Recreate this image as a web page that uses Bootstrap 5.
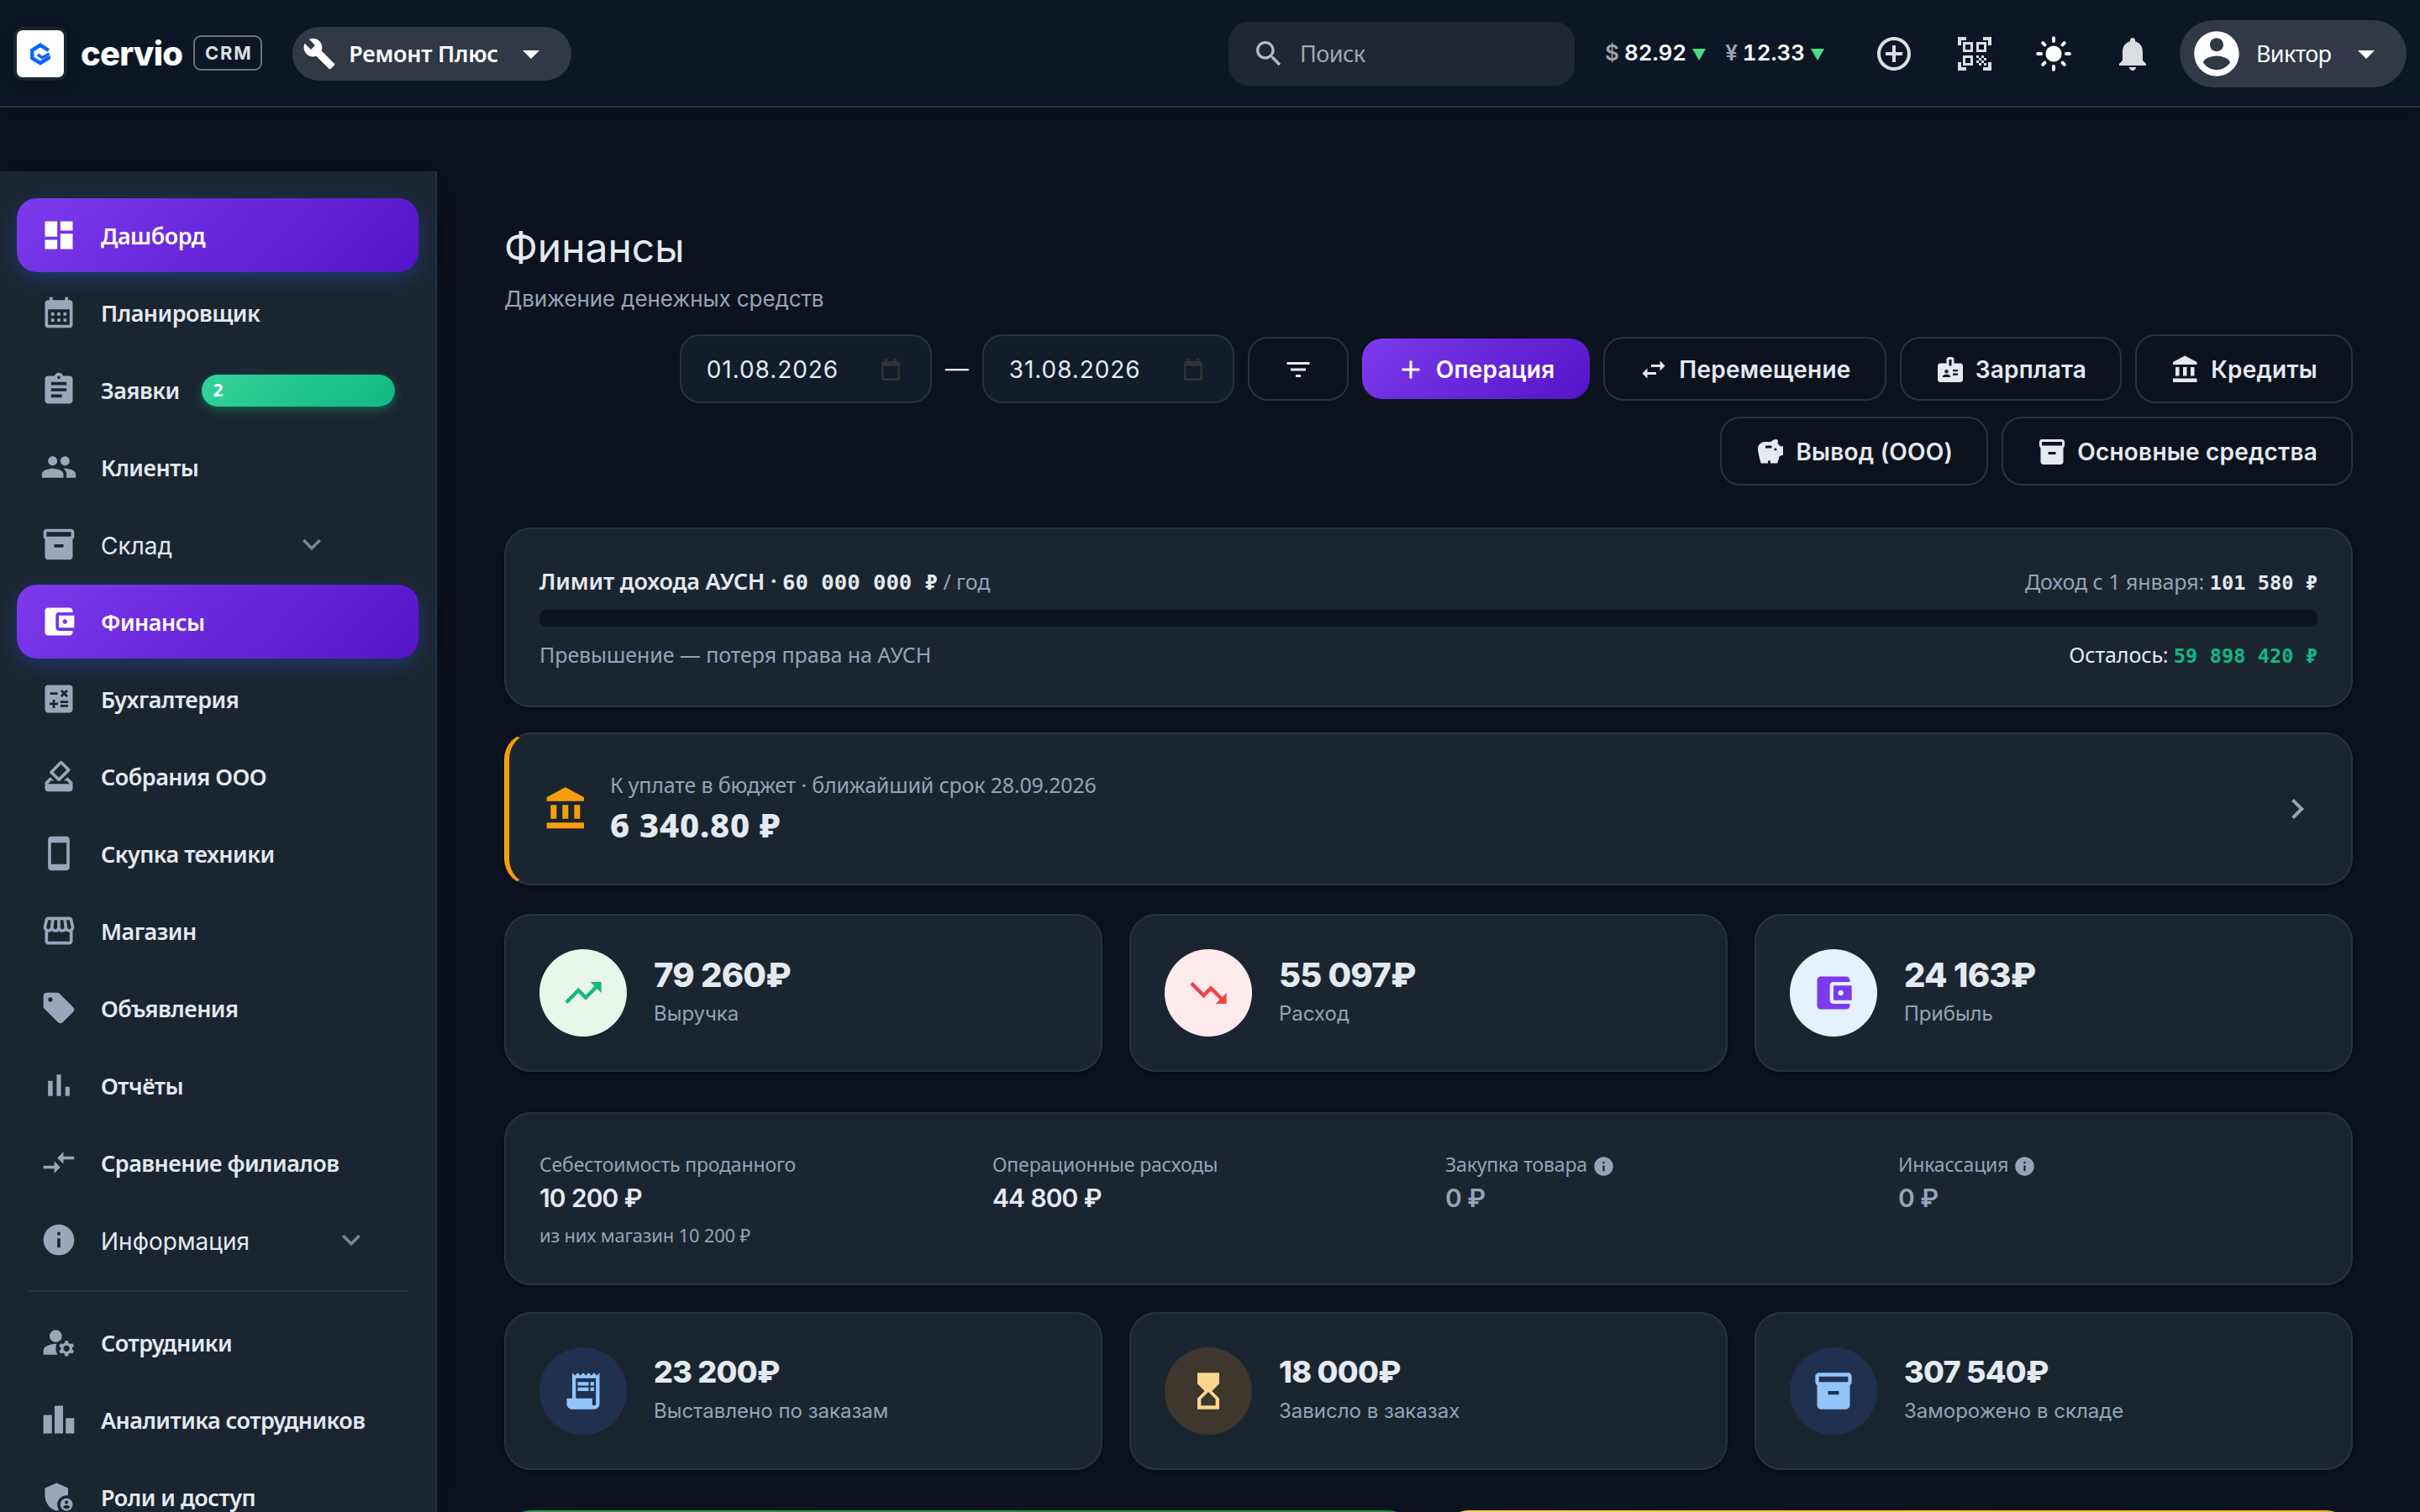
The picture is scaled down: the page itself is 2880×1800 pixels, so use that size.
<!DOCTYPE html>
<html lang="ru">
	<head>
		<meta charset="UTF-8" />
		<meta name="viewport" content="width=device-width, initial-scale=1.0" />
		<title>Финансы — cervio CRM</title>
		<link
			href="https://cdn.jsdelivr.net/npm/bootstrap@5.3.0/dist/css/bootstrap.min.css"
			rel="stylesheet"
		/>

		<style>
        :root {
            --line: #283144;
            --panel: #1b2530;
            --muted: #94a3b8;
            --light: #e5e9f0;
            --accent: linear-gradient(135deg, #7c3aed 0%, #5614c8 100%);
        }

        body {
            background: #0d131e;
            color: var(--light);
            font-family: "Noto Sans", sans-serif;
            font-size: 28px;
            line-height: 1.5;
            height: 1800px;
            overflow: hidden;
        }

        .mi {
            width: 1em;
            height: 1em;
            fill: currentColor;
            flex-shrink: 0;
            display: block;
        }

        .inter { font-family: Inter, sans-serif; }
        .muted { color: var(--muted); }

        /* top bar */
        .topbar {
            height: 128px;
            background: #0d1626;
            border-bottom: 2px solid var(--line);
            box-shadow: 0 4px 24px rgba(0, 0, 0, .3);
            padding: 2px 16px 0;
            position: relative;
            z-index: 2;
        }

        .logo-box {
            width: 64px;
            height: 64px;
            padding: 4px;
            border-radius: 12px;
            background: var(--panel);
            box-shadow: 0 4px 12px rgba(0, 0, 0, .3);
        }

        .logo-box div {
            height: 56px;
            border-radius: 7px;
            background: #fff;
        }

        .brand-name {
            font: 800 40px/1 Inter, sans-serif;
            letter-spacing: -.02em;
            color: #fff;
        }

        .brand-tag {
            font: 700 22px/1 Inter, sans-serif;
            letter-spacing: .08em;
            color: #dcdee1;
            border: 2px solid #6c737f;
            border-radius: 9px;
            height: 42px;
            width: 82px;
            margin: -2px 0 0 13px;
            padding-left: 2px;
        }

        .pill {
            background: #303945;
            color: #fff;
            border-radius: 50rem;
            font-size: 27px;
        }

        .org-pill {
            width: 332px;
            height: 64px;
            margin-left: 36px;
            padding-left: 12px;
            letter-spacing: -.01em;
        }

        .org-pill .mi { font-size: 40px; }
        .org-pill span { margin: 0 auto 0 15px; }
        .org-pill .drop { font-size: 48px; margin-right: 24px; }

        .search-box {
            width: 412px;
            height: 76px;
            border-radius: 24px;
            background: #1f2734;
            color: #a3a7ae;
            font-size: 27px;
            letter-spacing: -.02em;
            padding: 0 28px;
        }

        .search-box .mi { font-size: 40px; color: #b7bac0; margin-right: 17px; }

        .rates { width: 264px; gap: 23px; margin: -2px 0 0 36px; }

        .rate {
            font: 600 26px/1 Inter, sans-serif;
            font-variant-numeric: tabular-nums;
            color: #fff;
        }

        .rate span { color: #a0a3aa; margin-right: 6px; }

        .rate i {
            border: 8px solid transparent;
            border-top: 14px solid #4ade80;
            border-bottom: 0;
            margin: 4px 0 0 7px;
        }

        .tool-icons { font-size: 48px; gap: 46px; color: #dcdde1; margin: 0 32px 0 56px; }
        .tool-icons .mi:first-child { margin-right: 2px; }

        .user-pill {
            width: 270px;
            height: 80px;
            padding-left: 12px;
            letter-spacing: -.025em;
        }

        .user-pill .mi { font-size: 64px; }
        .user-pill span { margin: 0 auto 0 15px; }
        .user-pill .drop { font-size: 48px; margin-right: 24px; }

        /* side menu */
        .shell { height: 1672px; overflow: hidden; }

        .sidebar {
            width: 520px;
            height: 1596px;
            margin-top: 76px;
            flex-shrink: 0;
            padding: 32px 20px 0;
            background: var(--panel);
            border-right: 2px solid var(--line);
            box-shadow: 4px 0 40px rgba(0, 0, 0, .35);
        }

        .sidebar .nav-link {
            height: 88px;
            flex-shrink: 0;
            margin-bottom: 4px;
            padding: 3px 28px 0;
            gap: 28px;
            border-radius: 24px;
            color: var(--light);
            font-weight: 600;
            font-size: 27px;
            letter-spacing: -.02em;
        }

        .sidebar .nav-link .mi { font-size: 44px; color: #9aa7bb; margin-top: -3px; }
        .sidebar .nav-link.active,
        .sidebar .nav-link.active .mi { color: #fff; }

        .sidebar .nav-link.active {
            background: var(--accent);
            box-shadow: 0 8px 28px rgba(37, 99, 235, .32);
        }

        .sidebar .nav-link.group {
            font: 400 28px/1.5 Inter, sans-serif;
            letter-spacing: 0;
        }

        .sidebar .nav-link .caret { color: #78859a; margin-left: auto; }

        .count {
            flex: 0 0 230px;
            height: 38px;
            line-height: 36px;
            margin: -1px 0 0 -2px;
            padding-left: 14px;
            border-radius: 19px;
            background: linear-gradient(135deg, #34d399, #10b981);
            box-shadow: 0 4px 12px rgba(16, 185, 129, .4);
            color: #fff;
            font-size: 21px;
            font-weight: 700;
        }

        .side-line { height: 2px; margin: 12px 12px 16px; background: var(--line); }

        /* content */
        .content { padding: 138px 80px 0 80px; }

        .page-title {
            font: 400 48px/58px Inter, sans-serif;
            margin: 0 0 12px;
        }

        .page-sub {
            font: 400 26px/40px Inter, sans-serif;
            letter-spacing: -.004em;
            color: var(--muted);
            margin-bottom: 22px;
        }

        .toolbar { gap: 16px; margin-bottom: 50px; }

        .date-field {
            width: 300px;
            height: 82px;
            padding: 2px 34px 0 30px;
            border: 2px solid var(--line);
            border-radius: 24px;
            background: #121c2a;
            font: 400 28px/1 Inter, sans-serif;
            letter-spacing: .033em;
        }

        .date-field svg { width: 26px; height: 26px; fill: #333; }

        .tool {
            height: 82px;
            padding: 2px 40px 0;
            gap: 12px;
            border: 2px solid var(--line);
            border-radius: 24px;
            color: var(--light);
            font: 600 28px/1 Inter, sans-serif;
            letter-spacing: .008em;
        }

        .tool .mi { font-size: 36px; }
        .tool.short { height: 76px; }

        .tool.primary {
            height: 72px;
            border: 0;
            padding: 2px 42px 0 40px;
            background: var(--accent);
            color: #fff;
        }

        .panel {
            background: var(--panel);
            border: 2px solid var(--line);
            border-radius: 32px;
            padding: 40px;
            box-shadow: 0 2px 6px rgba(0, 0, 0, .5);
        }

        .limit {
            height: 214px;
            margin-bottom: 30px;
            padding-top: 42px;
            line-height: 40px;
            font-size: 25px;
            letter-spacing: -.003em;
        }

        .limit .lead-text { font-weight: 600; font-size: 27px; letter-spacing: -.007em; }
        .num { font-family: "DejaVu Sans Mono", monospace; font-weight: 700; font-size: 23.7px; letter-spacing: 0; }
        .lead-text .num { font-size: 25.6px; }
        .limit-bar { height: 20px; border-radius: 8px; background: #0e141f; margin: 12px 0 13px; }

        .tax {
            height: 182px;
            margin-bottom: 34px;
            border-left: 6px solid #f59e0b;
            gap: 24px;
        }

        .tax-note { font-size: 25px; line-height: 38px; letter-spacing: -.007em; }
        .tax-sum { font-weight: 800; font-size: 40px; line-height: 58px; letter-spacing: .02em; }

        .stats { gap: 32px; }
        .stats > .panel { flex: 1 1 0; height: 188px; gap: 32px; }

        .disc {
            width: 104px;
            height: 104px;
            border-radius: 50%;
            font-size: 52px;
            flex-shrink: 0;
        }

        .stat-value {
            font: 800 40px/46px Inter, sans-serif;
            letter-spacing: -.02em;
            margin-bottom: 3px;
        }

        .stat-value.small-value { font-size: 36px; line-height: 40px; margin-bottom: 7px; }
        .stat-label { font: 400 24px/40px Inter, sans-serif; color: var(--muted); }

        .costs { height: 206px; margin: 48px 0 32px; padding-top: 42px; gap: 40px; }
        .costs > div { flex: 1 1 0; }
        .cost-name { height: 36px; font-size: 23px; line-height: 36px; letter-spacing: -.007em; gap: 6px; color: var(--muted); }
        .cost-name .mi { font-size: 27px; margin-top: 5px; }
        .cost-sum { font: 600 30px/44px Inter, sans-serif; letter-spacing: -.03em; word-spacing: .02em; }
        .cost-note { font-size: 22px; line-height: 44px; letter-spacing: -.01em; color: var(--muted); }

        .banners { gap: 32px; margin-top: 48px; }
        .banners div { flex: 1 1 0; height: 180px; border-radius: 32px; }
    </style>
	</head>

	<body>
		<!-- icon sprite -->
		<svg class="d-none" xmlns="http://www.w3.org/2000/svg">
			<symbol id="build" viewBox="0 0 24 24"><path d="M22.7 19l-9.1-9.1c.9-2.3.4-5-1.5-6.9-2-2-5-2.4-7.4-1.3L9 6 6 9 1.6 4.7C.4 7.1.9 10.1 2.9 12.1c1.9 1.9 4.6 2.4 6.9 1.5l9.1 9.1c.4.4 1 .4 1.4 0l2.3-2.3c.5-.4.5-1.1.1-1.4z"/></symbol>
			<symbol id="drop" viewBox="0 0 24 24"><path d="M7 10l5 5 5-5z"/></symbol>
			<symbol id="search" viewBox="0 0 24 24"><path d="M15.5 14h-.79l-.28-.27C15.41 12.59 16 11.11 16 9.5 16 5.91 13.09 3 9.5 3S3 5.91 3 9.5 5.91 16 9.5 16c1.61 0 3.09-.59 4.23-1.57l.27.28v.79l5 4.99L20.49 19l-4.99-5zm-6 0C7.01 14 5 11.99 5 9.5S7.01 5 9.5 5 14 7.01 14 9.5 11.99 14 9.5 14z"/></symbol>
			<symbol id="add-circle" viewBox="0 0 24 24"><path d="M13 7h-2v4H7v2h4v4h2v-4h4v-2h-4V7zm-1-5C6.48 2 2 6.48 2 12s4.48 10 10 10 10-4.48 10-10S17.52 2 12 2zm0 18c-4.41 0-8-3.59-8-8s3.59-8 8-8 8 3.59 8 8-3.59 8-8 8z"/></symbol>
			<symbol id="qr" viewBox="0 0 24 24"><path d="M9.5 6.5v3h-3v-3h3M11 5H5v6h6V5zm-1.5 9.5v3h-3v-3h3M11 13H5v6h6v-6zm6.5-6.5v3h-3v-3h3M19 5h-6v6h6V5zm-6 8h1.5v1.5H13V13zm1.5 1.5H16V16h-1.5v-1.5zM16 13h1.5v1.5H16V13zm-3 3h1.5v1.5H13V16zm1.5 1.5H16V19h-1.5v-1.5zM16 16h1.5v1.5H16V16zm1.5-1.5H19V16h-1.5v-1.5zm0 3H19V19h-1.5v-1.5zM22 7h-2V4h-3V2h5v5zm0 15v-5h-2v3h-3v2h5zM2 22h5v-2H4v-3H2v5zM2 2v5h2V4h3V2H2z"/></symbol>
			<symbol id="sun" viewBox="0 0 24 24"><circle cx="12" cy="12" r="4.8"/><path fill="none" stroke="currentColor" stroke-width="2" stroke-linecap="round" d="M12 2.6v1.9M12 19.5v1.9M2.6 12h1.9M19.5 12h1.9M5.6 5.6l1.1 1.1M17.3 17.3l1.1 1.1M5.6 18.4l1.1-1.1M17.3 6.7l1.1-1.1"/></symbol>
			<symbol id="bell" viewBox="0 0 24 24"><path d="M12 22c1.1 0 2-.9 2-2h-4c0 1.1.89 2 2 2zm6-6v-5c0-3.07-1.64-5.64-4.5-6.32V4c0-.83-.67-1.5-1.5-1.5s-1.5.67-1.5 1.5v.68C7.63 5.36 6 7.92 6 11v5l-2 2v1h16v-1l-2-2z"/></symbol>
			<symbol id="account" viewBox="0 0 24 24"><path d="M12 2C6.48 2 2 6.48 2 12s4.48 10 10 10 10-4.48 10-10S17.52 2 12 2zm0 3c1.66 0 3 1.34 3 3s-1.34 3-3 3-3-1.34-3-3 1.34-3 3-3zm0 14.2c-2.5 0-4.71-1.28-6-3.22.03-1.99 4-3.08 6-3.08 1.99 0 5.97 1.09 6 3.08-1.29 1.94-3.5 3.22-6 3.22z"/></symbol>
			<symbol id="dashboard" viewBox="0 0 24 24"><path d="M3 13h8V3H3v10zm0 8h8v-6H3v6zm10 0h8V11h-8v10zm0-18v6h8V3h-8z"/></symbol>
			<symbol id="calendar" viewBox="0 0 24 24"><path d="M19 4h-1V2h-2v2H8V2H6v2H5c-1.11 0-1.99.9-1.99 2L3 20c0 1.1.89 2 2 2h14c1.1 0 2-.9 2-2V6c0-1.1-.9-2-2-2zm0 16H5V10h14v10zM9 14H7v-2h2v2zm4 0h-2v-2h2v2zm4 0h-2v-2h2v2zm-8 4H7v-2h2v2zm4 0h-2v-2h2v2zm4 0h-2v-2h2v2z"/></symbol>
			<symbol id="assignment" viewBox="0 0 24 24"><path d="M19 3h-4.18C14.4 1.84 13.3 1 12 1c-1.3 0-2.4.84-2.82 2H5c-1.1 0-2 .9-2 2v14c0 1.1.9 2 2 2h14c1.1 0 2-.9 2-2V5c0-1.1-.9-2-2-2zm-7 0c.55 0 1 .45 1 1s-.45 1-1 1-1-.45-1-1 .45-1 1-1zm2 14H7v-2h7v2zm3-4H7v-2h10v2zm0-4H7V7h10v2z"/></symbol>
			<symbol id="people" viewBox="0 0 24 24"><path d="M16 11c1.66 0 2.99-1.34 2.99-3S17.66 5 16 5c-1.66 0-3 1.34-3 3s1.34 3 3 3zm-8 0c1.66 0 2.99-1.34 2.99-3S9.66 5 8 5C6.34 5 5 6.34 5 8s1.34 3 3 3zm0 2c-2.33 0-7 1.17-7 3.5V19h14v-2.5c0-2.33-4.67-3.5-7-3.5zm8 0c-.29 0-.62.02-.97.05 1.16.84 1.97 1.97 1.97 3.45V19h6v-2.5c0-2.33-4.67-3.5-7-3.5z"/></symbol>
			<symbol id="inventory" viewBox="0 0 24 24"><path d="M20 2H4c-1 0-2 .9-2 2v3.01c0 .72.43 1.34 1 1.69V20c0 1.1 1.1 2 2 2h14c.9 0 2-.9 2-2V8.7c.57-.35 1-.97 1-1.69V4c0-1.1-1-2-2-2zm-5 12H9v-2h6v2zm5-7H4V4h16v3z"/></symbol>
			<symbol id="wallet" viewBox="0 0 24 24"><path d="M21 18v1c0 1.1-.9 2-2 2H5c-1.11 0-2-.9-2-2V5c0-1.1.89-2 2-2h14c1.1 0 2 .9 2 2v1h-9c-1.11 0-2 .9-2 2v8c0 1.1.89 2 2 2h9zm-9-2h10V8H12v8zm4-2.5c-.83 0-1.5-.67-1.5-1.5s.67-1.5 1.5-1.5 1.5.67 1.5 1.5-.67 1.5-1.5 1.5z"/></symbol>
			<symbol id="calculate" viewBox="0 0 24 24"><path d="M19 3H5c-1.1 0-2 .9-2 2v14c0 1.1.9 2 2 2h14c1.1 0 2-.9 2-2V5c0-1.1-.9-2-2-2zm-5.97 4.06L14.09 6l1.41 1.41L16.91 6l1.06 1.06-1.41 1.41 1.41 1.41-1.06 1.06-1.41-1.4-1.41 1.41-1.06-1.06 1.41-1.41-1.41-1.42zm-6.78.66h5v1.5h-5v-1.5zM11.5 16h-2v2H8v-2H6v-1.5h2v-2h1.5v2h2V16zm6.5 1.25h-5v-1.5h5v1.5zm0-2.5h-5v-1.5h5v1.5z"/></symbol>
			<symbol id="vote" viewBox="0 0 24 24"><path d="M18 13h-.68l-2 2h1.91L19 17H5l1.78-2h2.05l-2-2H6l-3 3v4c0 1.1.89 2 1.99 2H19c1.1 0 2-.89 2-2v-4l-3-3zm-1-5.05l-4.95 4.95-3.54-3.54 4.95-4.95L17 7.95zm-4.24-5.66L6.39 8.66c-.39.39-.39 1.02 0 1.41l4.95 4.95c.39.39 1.02.39 1.41 0l6.36-6.36c.39-.39.39-1.02 0-1.41L14.16 2.3c-.38-.4-1.01-.4-1.4-.01z"/></symbol>
			<symbol id="phone" viewBox="0 0 24 24"><path d="M17 1.01L7 1c-1.1 0-2 .9-2 2v18c0 1.1.9 2 2 2h10c1.1 0 2-.9 2-2V3c0-1.1-.9-1.99-2-1.99zM17 19H7V5h10v14z"/></symbol>
			<symbol id="store" viewBox="0 0 24 24"><path d="M21.9 8.89l-1.05-4.37c-.22-.9-1-1.52-1.91-1.52H5.05c-.9 0-1.69.63-1.9 1.52L2.1 8.89c-.24 1.02-.02 2.06.62 2.88.08.11.19.19.28.29V19c0 1.1.9 2 2 2h14c1.1 0 2-.9 2-2v-6.94c.09-.09.2-.18.28-.28.64-.82.87-1.87.62-2.89zm-2.99-3.9l1.05 4.37c.1.42.01.84-.25 1.17-.14.18-.44.47-.94.47-.61 0-1.14-.49-1.21-1.14L16.98 5l1.93-.01zM13 5h1.96l.54 4.52c.05.39-.07.78-.33 1.07-.22.26-.54.41-.95.41-.67 0-1.22-.59-1.22-1.31V5zM8.49 9.52L9.04 5H11v4.69c0 .72-.55 1.31-1.29 1.31-.34 0-.65-.15-.89-.41-.25-.29-.37-.68-.33-1.07zm-4.45-.16L5.05 5h1.97l-.58 4.86c-.08.65-.6 1.14-1.21 1.14-.49 0-.8-.29-.93-.47-.27-.32-.36-.75-.26-1.17zM5 19v-6.03c.08.01.15.03.23.03.87 0 1.66-.36 2.24-.95.6.6 1.4.95 2.31.95.87 0 1.65-.36 2.23-.93.59.57 1.39.93 2.29.93.84 0 1.64-.35 2.24-.95.58.59 1.37.95 2.24.95.08 0 .15-.02.23-.03V19H5z"/></symbol>
			<symbol id="sell" viewBox="0 0 24 24"><path d="M21.41 11.58l-9-9C12.05 2.22 11.55 2 11 2H4c-1.1 0-2 .9-2 2v7c0 .55.22 1.05.59 1.42l9 9c.36.36.86.58 1.41.58s1.05-.22 1.41-.59l7-7c.37-.36.59-.86.59-1.41s-.23-1.06-.59-1.42zM6.5 8C5.67 8 5 7.33 5 6.5S5.67 5 6.5 5 8 5.67 8 6.5 7.33 8 6.5 8z"/></symbol>
			<symbol id="bars" viewBox="0 0 24 24"><path d="M5 9.2h3V19H5V9.2zM10.6 5h2.8v14h-2.8V5zm5.6 8H19v6h-2.8v-6z"/></symbol>
			<symbol id="compare" viewBox="0 0 24 24"><path d="M9.01 14H2v2h7.01v3L13 15l-3.99-4v3zm5.98-1v-3H22V8h-7.01V5L11 9l3.99 4z"/></symbol>
			<symbol id="info" viewBox="0 0 24 24"><path d="M12 2C6.48 2 2 6.48 2 12s4.48 10 10 10 10-4.48 10-10S17.52 2 12 2zm1 15h-2v-6h2v6zm0-8h-2V7h2v2z"/></symbol>
			<symbol id="expand" viewBox="0 0 24 24"><path d="M16.59 8.59L12 13.17 7.41 8.59 6 10l6 6 6-6z"/></symbol>
			<symbol id="staff" viewBox="0 0 24 24"><circle cx="10" cy="8" r="4"/><path d="M10.67 13.02C10.45 13.01 10.23 13 10 13c-2.42 0-4.68.67-6.61 1.82-.88.52-1.39 1.5-1.39 2.53V20h9.26C10.47 18.87 10 17.49 10 16c0-1.07.25-2.07.67-2.98zM20.75 16c0-.22-.03-.42-.06-.63l1.14-1.01-1-1.73-1.45.49c-.32-.27-.68-.48-1.08-.63L18 11h-2l-.3 1.49c-.4.15-.76.36-1.08.63l-1.45-.49-1 1.73 1.14 1.01c-.03.21-.06.41-.06.63s.03.42.06.63l-1.14 1.01 1 1.73 1.45-.49c.32.27.68.48 1.08.63L16 21h2l.3-1.49c.4-.15.76-.36 1.08-.63l1.45.49 1-1.73-1.14-1.01c.03-.21.06-.41.06-.63zM17 18c-1.1 0-2-.9-2-2s.9-2 2-2 2 .9 2 2-.9 2-2 2z"/></symbol>
			<symbol id="leaderboard" viewBox="0 0 24 24"><path d="M7.5 21H2V9h5.5v12zm7.25-18h-5.5v18h5.5V3zM22 11h-5.5v10H22V11z"/></symbol>
			<symbol id="admin" viewBox="0 0 24 24"><path d="M17 11c.34 0 .67.04 1 .09V6.27L10.5 3 3 6.27v4.91c0 4.54 3.2 8.79 7.5 9.82.55-.13 1.08-.32 1.6-.55-.69-.98-1.1-2.17-1.1-3.45 0-3.31 2.69-6 6-6zM17 13c-2.21 0-4 1.79-4 4s1.79 4 4 4 4-1.79 4-4-1.79-4-4-4zm0 1.38c.62 0 1.12.51 1.12 1.12s-.51 1.12-1.12 1.12-1.12-.51-1.12-1.12.5-1.12 1.12-1.12zm0 5.37c-.93 0-1.74-.46-2.24-1.17.05-.72 1.51-1.08 2.24-1.08s2.19.36 2.24 1.08c-.5.71-1.31 1.17-2.24 1.17z"/></symbol>
			<symbol id="filter" viewBox="0 0 24 24"><path d="M10 18h4v-2h-4v2zM3 6v2h18V6H3zm3 7h12v-2H6v2z"/></symbol>
			<symbol id="add" viewBox="0 0 24 24"><path d="M19 13h-6v6h-2v-6H5v-2h6V5h2v6h6v2z"/></symbol>
			<symbol id="swap" viewBox="0 0 24 24"><path d="M6.99 11L3 15l3.99 4v-3H14v-2H6.99v-3zM21 9l-3.99-4v3H10v2h7.01v3L21 9z"/></symbol>
			<symbol id="id-badge" viewBox="0 0 24 24"><path d="M20 7h-5V4c0-1.1-.9-2-2-2h-2c-1.1 0-2 .9-2 2v3H4c-1.1 0-2 .9-2 2v11c0 1.1.9 2 2 2h16c1.1 0 2-.9 2-2V9c0-1.1-.9-2-2-2zM9 12c.83 0 1.5.67 1.5 1.5S9.83 15 9 15s-1.5-.67-1.5-1.5S8.17 12 9 12zm3 6H6v-.75c0-1 2-1.5 3-1.5s3 .5 3 1.5V18zm1-9h-2V4h2v5zm5 7.5h-4V15h4v1.5zm0-3h-4V12h4v1.5z"/></symbol>
			<symbol id="bank" viewBox="0 0 24 24"><path d="M4 10v7h3v-7H4zm6 0v7h3v-7h-3zM2 22h19v-3H2v3zm14-12v7h3v-7h-3zm-4.5-9L2 6v2h19V6l-9.5-5z"/></symbol>
			<symbol id="savings" viewBox="0 0 24 24"><path d="M19.83 7.5l-2.27-2.27c.07-.42.18-.81.32-1.15.08-.18.12-.37.12-.58 0-.83-.67-1.5-1.5-1.5-1.64 0-3.09.79-4 2h-5C4.46 4 2 6.46 2 9.5S4.5 21 4.5 21H10v-2h2v2h5.5l1.68-5.59 2.82-.94V7.5h-2.17zM13 9H8V7h5v2zm3 2c-.55 0-1-.45-1-1s.45-1 1-1 1 .45 1 1-.45 1-1 1z"/></symbol>
			<symbol id="right" viewBox="0 0 24 24"><path d="M10 6L8.59 7.41 13.17 12l-4.58 4.59L10 18l6-6z"/></symbol>
			<symbol id="up" viewBox="0 0 24 24"><path d="M16 6l2.29 2.29-4.88 4.88-4-4L2 16.59 3.41 18l6-6 4 4 6.3-6.29L22 12V6z"/></symbol>
			<symbol id="down" viewBox="0 0 24 24"><path d="M16 18l2.29-2.29-4.88-4.88-4 4L2 7.41 3.41 6l6 6 4-4 6.3 6.29L22 12v6z"/></symbol>
			<symbol id="receipt" viewBox="0 0 24 24"><path d="M19.5 3.5L18 2l-1.5 1.5L15 2l-1.5 1.5L12 2l-1.5 1.5L9 2 7.5 3.5 6 2v14H3v3c0 1.66 1.34 3 3 3h12c1.66 0 3-1.34 3-3V2l-1.5 1.5zM19 19c0 .55-.45 1-1 1s-1-.45-1-1v-3H8V5h11v14zM9 7h6v2H9zM16 7h2v2h-2zM9 10h6v2H9zM16 10h2v2h-2z"/></symbol>
			<symbol id="hourglass" viewBox="0 0 24 24"><path d="M6 2l.01 6L10 12l-3.99 4.01L6 22h12v-6l-4-4 4-3.99V2H6zm10 14.5V20H8v-3.5l4-4 4 4z"/></symbol>
			<symbol id="date" viewBox="0 0 24 24"><path d="M19 2.500h-1V0h-2.500v2.500h-7V0H6v2.500H4c-1.100 0-2 .9-2 2V22c0 1.100.9 2 2 2h16c1.100 0 2-.9 2-2V4.500c0-1.100-.9-2-2-2zm.8 19.300H4.200V8h15.600z"/></symbol>
		</svg>

		<header class="topbar d-flex align-items-center">
			<div class="logo-box">
				<div class="d-flex align-items-center justify-content-center">
					<svg width="24" height="27" viewBox="0 0 24 27" fill="none" stroke="#0b63ff" stroke-width="4.4">
						<path d="M21.8 9L12 2.700 2.300 8.800v9.400L12 24.200l9.800-6.200v-2.500" />
						<path stroke-width="3.400" d="M8.800 13.800l5.400 4L22.600 13" />
					</svg>
				</div>
			</div>
			<div class="brand-name ms-3">cervio</div>
			<div class="brand-tag d-flex align-items-center justify-content-center">CRM</div>
			<div class="pill org-pill d-flex align-items-center fw-semibold">
				<svg class="mi"><use href="#build" /></svg>
				<span>Ремонт Плюс</span>
				<svg class="mi drop"><use href="#drop" /></svg>
			</div>

			<div class="search-box d-flex align-items-center ms-auto">
				<svg class="mi"><use href="#search" /></svg>
				<span>Поиск</span>
			</div>
			<div class="rates d-flex">
				<div class="rate d-flex align-items-center"><span>$</span>82.92<i></i></div>
				<div class="rate d-flex align-items-center"><span>¥</span>12.33<i></i></div>
			</div>
			<div class="tool-icons d-flex">
				<svg class="mi"><use href="#add-circle" /></svg>
				<svg class="mi"><use href="#qr" /></svg>
				<svg class="mi text-white"><use href="#sun" /></svg>
				<svg class="mi"><use href="#bell" /></svg>
			</div>
			<div class="pill user-pill d-flex align-items-center">
				<svg class="mi"><use href="#account" /></svg>
				<span>Виктор</span>
				<svg class="mi drop"><use href="#drop" /></svg>
			</div>
		</header>

		<div class="shell d-flex">
			<nav class="sidebar nav flex-column flex-nowrap">
				<a class="nav-link active d-flex align-items-center"><svg class="mi"><use href="#dashboard" /></svg>Дашборд</a>
				<a class="nav-link d-flex align-items-center"><svg class="mi"><use href="#calendar" /></svg>Планировщик</a>
				<a class="nav-link d-flex align-items-center"><svg class="mi"><use href="#assignment" /></svg>Заявки<span class="count">2</span></a>
				<a class="nav-link d-flex align-items-center"><svg class="mi"><use href="#people" /></svg>Клиенты</a>
				<a class="nav-link group d-flex align-items-center"><svg class="mi"><use href="#inventory" /></svg>Склад<svg class="mi caret" style="margin-right: 77px"><use href="#expand" /></svg></a>
				<a class="nav-link active d-flex align-items-center"><svg class="mi"><use href="#wallet" /></svg>Финансы</a>
				<a class="nav-link d-flex align-items-center"><svg class="mi"><use href="#calculate" /></svg>Бухгалтерия</a>
				<a class="nav-link d-flex align-items-center"><svg class="mi"><use href="#vote" /></svg>Собрания ООО</a>
				<a class="nav-link d-flex align-items-center"><svg class="mi"><use href="#phone" /></svg>Скупка техники</a>
				<a class="nav-link d-flex align-items-center"><svg class="mi"><use href="#store" /></svg>Магазин</a>
				<a class="nav-link d-flex align-items-center"><svg class="mi"><use href="#sell" /></svg>Объявления</a>
				<a class="nav-link d-flex align-items-center"><svg class="mi"><use href="#bars" /></svg>Отчёты</a>
				<a class="nav-link d-flex align-items-center"><svg class="mi"><use href="#compare" /></svg>Сравнение филиалов</a>
				<a class="nav-link group d-flex align-items-center"><svg class="mi"><use href="#info" /></svg>Информация<svg class="mi caret" style="margin-right: 30px"><use href="#expand" /></svg></a>
				<div class="side-line flex-shrink-0"></div>
				<a class="nav-link d-flex align-items-center"><svg class="mi"><use href="#staff" /></svg>Сотрудники</a>
				<a class="nav-link d-flex align-items-center"><svg class="mi"><use href="#leaderboard" /></svg>Аналитика сотрудников</a>
				<a class="nav-link d-flex align-items-center"><svg class="mi"><use href="#admin" /></svg>Роли и доступ</a>
			</nav>

			<main class="content flex-grow-1">
				<h1 class="page-title">Финансы</h1>
				<div class="page-sub">Движение денежных средств</div>

				<div class="toolbar d-flex flex-wrap align-items-center justify-content-end">
					<div class="date-field d-flex align-items-center justify-content-between">01.08.2026<svg><use href="#date" /></svg></div>
					<span class="inter">—</span>
					<div class="date-field d-flex align-items-center justify-content-between">31.08.2026<svg><use href="#date" /></svg></div>
					<button class="btn tool short d-flex align-items-center"><svg class="mi"><use href="#filter" /></svg></button>
					<button class="btn tool primary d-flex align-items-center"><svg class="mi"><use href="#add" /></svg>Операция</button>
					<button class="btn tool short d-flex align-items-center"><svg class="mi"><use href="#swap" /></svg>Перемещение</button>
					<button class="btn tool short d-flex align-items-center"><svg class="mi"><use href="#id-badge" /></svg>Зарплата</button>
					<button class="btn tool d-flex align-items-center"><svg class="mi"><use href="#bank" /></svg>Кредиты</button>
					<button class="btn tool d-flex align-items-center"><svg class="mi"><use href="#savings" /></svg>Вывод (ООО)</button>
					<button class="btn tool d-flex align-items-center"><svg class="mi"><use href="#inventory" /></svg>Основные средства</button>
				</div>

				<section class="panel limit">
					<div class="d-flex justify-content-between">
						<div><span class="lead-text">Лимит дохода АУСН · <span class="num">60 000 000 ₽</span></span> <span class="muted">/ год</span></div>
						<div><span class="muted">Доход с 1 января:</span> <span class="num">101 580 ₽</span></div>
					</div>
					<div class="limit-bar"></div>
					<div class="d-flex justify-content-between">
						<div class="muted">Превышение — потеря права на АУСН</div>
						<div>Осталось: <span class="num" style="color: #10b981">59 898 420 ₽</span></div>
					</div>
				</section>

				<section class="panel tax d-flex align-items-center">
					<svg class="mi" style="font-size: 56px; color: #f59e0b"><use href="#bank" /></svg>
					<div>
						<div class="tax-note muted">К уплате в бюджет · ближайший срок 28.09.2026</div>
						<div class="tax-sum">6 340.80 ₽</div>
					</div>
					<svg class="mi muted ms-auto" style="font-size: 48px"><use href="#right" /></svg>
				</section>

				<section class="stats d-flex">
					<div class="panel d-flex align-items-center">
						<div class="disc d-flex align-items-center justify-content-center" style="background: #e8f5e9; color: #10b981"><svg class="mi"><use href="#up" /></svg></div>
						<div>
							<div class="stat-value">79 260₽</div>
							<div class="stat-label">Выручка</div>
						</div>
					</div>
					<div class="panel d-flex align-items-center">
						<div class="disc d-flex align-items-center justify-content-center" style="background: #ffebee; color: #ef4444"><svg class="mi"><use href="#down" /></svg></div>
						<div>
							<div class="stat-value">55 097₽</div>
							<div class="stat-label">Расход</div>
						</div>
					</div>
					<div class="panel d-flex align-items-center">
						<div class="disc d-flex align-items-center justify-content-center" style="background: #e3f2fd; color: #7c3aed"><svg class="mi"><use href="#wallet" /></svg></div>
						<div>
							<div class="stat-value">24 163₽</div>
							<div class="stat-label">Прибыль</div>
						</div>
					</div>
				</section>

				<section class="panel costs d-flex">
					<div>
						<div class="cost-name">Себестоимость проданного</div>
						<div class="cost-sum">10 200 ₽</div>
						<div class="cost-note">из них магазин 10 200 ₽</div>
					</div>
					<div>
						<div class="cost-name">Операционные расходы</div>
						<div class="cost-sum">44 800 ₽</div>
					</div>
					<div>
						<div class="cost-name d-flex align-items-center">Закупка товара <svg class="mi"><use href="#info" /></svg></div>
						<div class="cost-sum muted">0 ₽</div>
					</div>
					<div>
						<div class="cost-name d-flex align-items-center">Инкассация <svg class="mi"><use href="#info" /></svg></div>
						<div class="cost-sum muted">0 ₽</div>
					</div>
				</section>

				<section class="stats d-flex">
					<div class="panel d-flex align-items-center">
						<div class="disc d-flex align-items-center justify-content-center" style="background: #203150; color: #93c5fd"><svg class="mi"><use href="#receipt" /></svg></div>
						<div>
							<div class="stat-value small-value">23 200₽</div>
							<div class="stat-label">Выставлено по заказам</div>
						</div>
					</div>
					<div class="panel d-flex align-items-center">
						<div class="disc d-flex align-items-center justify-content-center" style="background: #3d372d; color: #fcd68e"><svg class="mi"><use href="#hourglass" /></svg></div>
						<div>
							<div class="stat-value small-value">18 000₽</div>
							<div class="stat-label">Зависло в заказах</div>
						</div>
					</div>
					<div class="panel d-flex align-items-center">
						<div class="disc d-flex align-items-center justify-content-center" style="background: #203150; color: #93c5fd"><svg class="mi"><use href="#inventory" /></svg></div>
						<div>
							<div class="stat-value small-value">307 540₽</div>
							<div class="stat-label">Заморожено в складе</div>
						</div>
					</div>
				</section>

				<section class="banners d-flex">
					<div style="background: linear-gradient(135deg, #22a04e, #15803d)"></div>
					<div style="background: linear-gradient(135deg, #fcd34d, #eab308)"></div>
				</section>
			</main>
		</div>

		<script src="https://cdn.jsdelivr.net/npm/bootstrap@5.3.0/dist/js/bootstrap.bundle.min.js"></script>
	</body>
</html>
